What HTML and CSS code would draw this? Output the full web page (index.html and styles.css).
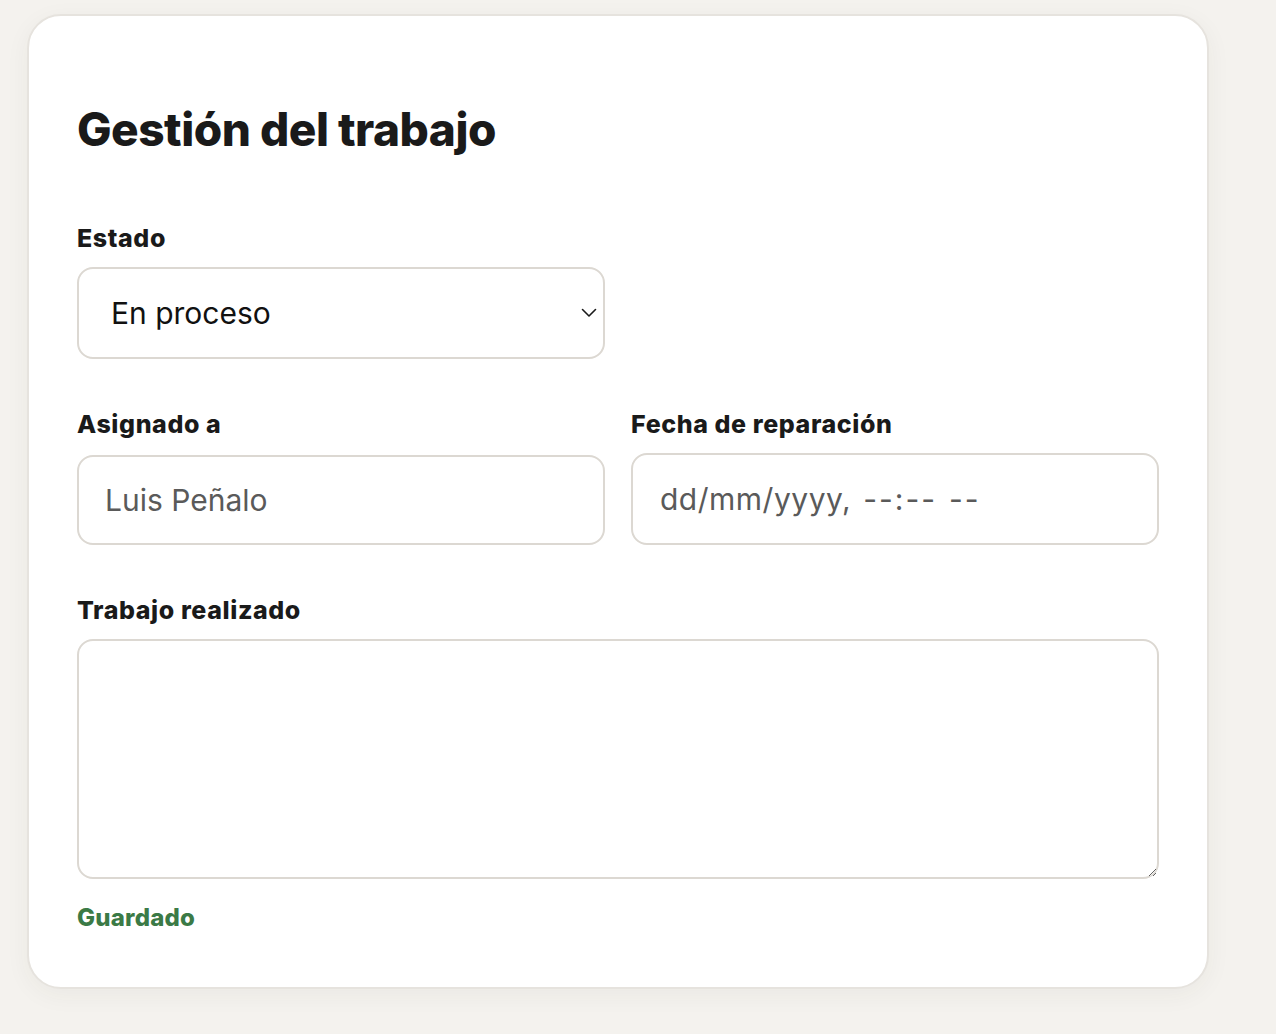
FILE: index.html
```html
<!DOCTYPE html>
<html lang="es">
<head>
<meta charset="utf-8">
<title>Gestión del trabajo</title>
<link rel="stylesheet" href="styles.css">
</head>
<body>
<section class="card">
  <h1 class="title">Gestión del trabajo</h1>

  <div class="field field-half">
    <label class="label" for="estado">Estado</label>
    <div class="select-wrap">
      <select id="estado" class="control select">
        <option>En proceso</option>
      </select>
      <svg class="chevron" viewBox="0 0 16 10" width="16" height="10" aria-hidden="true">
        <path d="M1.5 1.5 L8 8 L14.5 1.5" fill="none" stroke="#1a1a1a" stroke-width="1.6" stroke-linecap="round" stroke-linejoin="round"/>
      </svg>
    </div>
  </div>

  <div class="row">
    <div class="field">
      <label class="label" for="asignado">Asignado a</label>
      <input id="asignado" class="control input input-text" type="text" placeholder="Luis Peñalo">
    </div>
    <div class="field">
      <label class="label" for="fecha">Fecha de reparación</label>
      <div class="control input input-date" id="fecha"><span class="date-part">dd/mm/yyyy,</span><span class="dash">--:--</span><span class="dash">--</span></div>
    </div>
  </div>

  <div class="field field-wide">
    <label class="label" for="trabajo">Trabajo realizado</label>
    <textarea id="trabajo" class="control textarea"></textarea>
  </div>

  <p class="status">Guardado</p>
</section>
</body>
</html>
```

FILE: styles.css
```css
* { box-sizing: border-box; }

html, body {
  margin: 0;
  padding: 0;
}

body {
  background: #f4f2ee;
  font-family: Inter, "Liberation Sans", sans-serif;
  color: #1a1a1a;
  padding: 14px 0 0 27px;
  min-height: 1034px;
}

.card {
  width: 1182px;
  height: 975px;
  background: #ffffff;
  border: 2px solid #e6e3de;
  border-radius: 34px;
  box-shadow: 0 6px 24px rgba(60, 50, 30, 0.05);
  padding: 85px 48px 0 48px;
  display: flex;
  flex-direction: column;
}

.title {
  margin: 0;
  font-size: 46px;
  line-height: 56px;
  font-weight: 800;
  letter-spacing: -0.5px;
  color: #1a1a1a;
}

.field {
  display: flex;
  flex-direction: column;
}

.field-half {
  width: 528px;
  margin-top: 66px;
}

.field-wide {
  margin-top: 50px;
}

.label {
  display: block;
  font-size: 25px;
  line-height: 30px;
  font-weight: 800;
  letter-spacing: 0.6px;
  color: #1a1a1a;
  margin-bottom: 14px;
}

.row {
  display: grid;
  grid-template-columns: 528px 528px;
  column-gap: 26px;
  margin-top: 50px;
}

.control {
  font-family: Inter, "Liberation Sans", sans-serif;
  font-size: 30px;
  font-weight: 400;
  background: #ffffff;
  border: 2px solid #dcd8d2;
  border-radius: 16px;
  color: #111111;
  outline: none;
  margin: 0;
}

.select-wrap {
  position: relative;
  height: 92px;
}

.select {
  appearance: none;
  -webkit-appearance: none;
  width: 100%;
  height: 92px;
  padding: 0 60px 0 32px;
  color: #111111;
}

.chevron {
  position: absolute;
  right: 8px;
  top: 41px;
  pointer-events: none;
}

.input {
  width: 100%;
  height: 92px;
  padding: 0 26px;
  display: flex;
  align-items: center;
}

.input-text {
  height: 90px;
  margin-top: 2px;
}

.input::placeholder {
  color: #5a5a5a;
  opacity: 1;
}

.input-date {
  color: #5a5a5a;
  padding-left: 27px;
  gap: 12px;
}

.date-part {
  letter-spacing: 0.5px;
}

.dash {
  letter-spacing: 2px;
}

.textarea {
  width: 100%;
  height: 240px;
  resize: vertical;
  padding: 16px 26px;
  display: block;
}

.status {
  margin: 24px 0 0 0;
  font-size: 24px;
  line-height: 30px;
  font-weight: 800;
  letter-spacing: 0.2px;
  color: #3b7a46;
}
```
